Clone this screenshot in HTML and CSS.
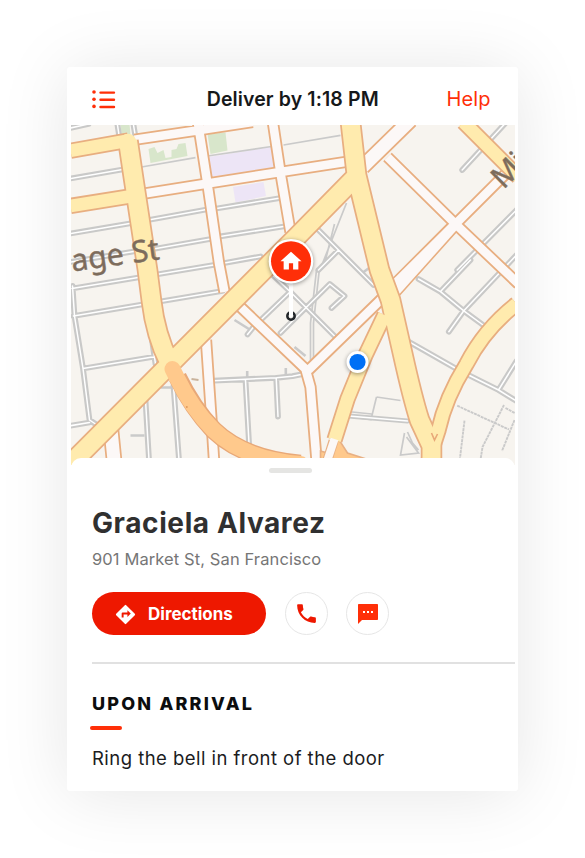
FILE: index.html
```html
<!DOCTYPE html>
<html lang="en">
<head>
<meta charset="utf-8">
<title>Delivery</title>
<link rel="stylesheet" href="styles.css">
</head>
<body>
<main class="card">
  <header class="bar">
    <svg class="menu" viewBox="0 0 24 20" aria-hidden="true">
      <g fill="currentColor"><circle cx="2" cy="2" r="1.800"/><circle cx="2" cy="9.200" r="1.800"/><circle cx="2" cy="16.400" r="1.800"/></g>
      <path d="M8.500 2.600H22M8.500 9.800H22M8.500 17H22" stroke="currentColor" stroke-width="2.400" stroke-linecap="round"/>
    </svg>
    <span class="title">Deliver by 1:18 PM</span>
    <a class="help">Help</a>
  </header>

  <svg class="map" viewBox="70.5 125 444 340">
    <defs>
      <path id="lanes" d="M70 178.500L122 169.500M70 233.500L132 223M70 262L133 251.500M71.500 288.500L213 265L260 256.500M73 316L222 291M72 286L74 316L82.500 368.500L89 420L98 426M82.500 368.500L155 356.500M70 425.700L89 422.500M151.500 340L155 364M148 220L206 209.500M213 209L280 198M150 249.500L210 239M218 236.700L283 226.500M116.500 122L119 138M132.500 122L135 137M70 128L88 124M145 400L148.500 460M173 386L178.500 460M213 380.700L276 377.800L292 376.200L308 373M245 380L249 452M275.700 378L277.500 416.500M247 334.500L253 327L290 291.500M271 274L290 292L336 338M280 333L329.300 284L344 296L331 308M318 230L373 285M338 250L318 270M461.700 170L506 122M456.700 270L516 210M470 260L440 291.500M516 255L463.300 310.700L448.300 331.700M418 279L440 291.700L463 310.700L488 329M408.300 341.700L458 370L498 390L516 401M498 390L516 361"/>
      <path id="white" d="M134 139.800L193 131L252 122M141 194L207 183.500L280 172L348 161.500M197.500 123L207 184L218.500 263L224 292M205.500 340L211 420L213.500 460M272.500 123L280 173L290 232M240 307L305 369L310 387L316 460M308 370L378 302L423 257L455 224L508 171M387 157L455 224L518 284"/>
      <path id="wide" d="M362 167L410 120M110 425L113.500 460"/>
      <path id="ybroad" d="M127.500 141L133 178L147 270L151 301Q155 335 169 363M55 479L297 236L355 177M350 122L356 175L379 270L390 300L402 353Q412 398 419 420L431 446L431 464"/>
      <path id="ythin" d="M70 150.800L128 140.500M70 206L135 195.500M384 315L365 355L347 399L334 440M516 304Q484 329 466 364Q445 398 438 430L427 464M463 122L518 177"/>
    </defs>
    <rect x="70" y="124" width="446" height="342" fill="#f7f4ef"/>
    <g fill="#d8e6cb">
      <path d="M148 149L154 147L157 153L163 150L165 158L171 157V150L176 149L178 144L185 143L187 156L150 163Z"/>
      <path d="M207 134L225 132.500L227 150.500L210 154Z"/>
      <path d="M120 124H129L130 135H121Z"/>
    </g>
    <g fill="#ede5f6"><path d="M208 157L271 147L273.500 167L211 177Z"/><path d="M232.500 187L263 182L265.500 196L235 202.500Z"/></g>
    <g fill="none" stroke="#cacaca" stroke-width="1.700">
      <path d="M141 167L195 157.700M207 156L271 146.500M283 145L340 135.300M346 203L321 266M334 224L325 260M319 268L313 323V360M316 270L310 323V360M376 397L400 400.500M376 397L370.500 419.500L345 416.500M347 411.500L371 414M404 433L400 455L418 453L406 437M407 432L412 443L418 450"/>
      <path d="M130 435.500H144M160 387.500H173M246.700 371V378M285.300 368V375M234 320L250 330M361.700 273L370 267M294 347L305 356" stroke-width="2.600"/>
      <path d="M456.700 405.700L508.500 429.500M503.500 405L482 447L480 460M505 408L516 414M514 420L501.500 451M464 420.700L459.500 458" stroke-dasharray="3 .7" stroke-width="1.900"/>
    </g>
    <g fill="none" stroke-linecap="round" stroke-linejoin="round">
      <use href="#lanes" stroke="#c9c9c8" stroke-width="5.800"/>
      <path d="M348 416L407 421" stroke="#c9c9c8" stroke-width="5"/>
      <use href="#lanes" stroke="#fff" stroke-width="1.500"/>
      <path d="M348 416L407 421" stroke="#fff" stroke-width="1.600"/>
    </g>
    <g fill="none">
      <g stroke="#e8ae80"><use href="#white" stroke-width="12.200"/><use href="#wide" stroke-width="16.500"/><path d="M391 280L451 220L459 228L399 295Z" fill="#e8ae80" stroke-width="1.700"/></g>
      <g stroke="#fcf8f7"><use href="#white" stroke-width="8.600"/><use href="#wide" stroke-width="13"/><path d="M391 281L451 221.500L458 228L399 294Z" fill="#fcf8f7" stroke="none"/></g>
      <path d="M320 460L320 451L327 453L334 438L340 442L347 453L372 461Z" fill="#ffc98c" stroke="#e8b084" stroke-width="1.600"/>
      <g stroke="#e8ae80"><use href="#ythin" stroke-width="16.400"/><use href="#ybroad" stroke-width="21.500"/></g>
      <g stroke="#ffebae" stroke-linejoin="round"><use href="#ythin" stroke-width="12.800"/><use href="#ybroad" stroke-width="18"/></g>
      <circle cx="127.500" cy="142" r="8.300" fill="#ffebae"/>
      <path d="M333 441L327 460" stroke="#e8b084" stroke-width="10"/>
      <path d="M334 439L327 460" stroke="#fcf8f7" stroke-width="8"/>
      <path d="M177 377Q192 408 213 430Q243 459 300 464" stroke="#e8a878" stroke-width="18.500"/>
      <path d="M172 369L176 377Q191 408 213 430Q243 459 300 464" stroke="#ffc98c" stroke-width="16" stroke-linecap="round"/>
      <path d="M431 433L434 440L437 434" stroke="#e8a878" stroke-width="1.600"/>
      <path d="M191 379L198 380" stroke="#c9b39c" stroke-width="2"/>
    </g>
    <circle cx="186.300" cy="407" r="1" fill="#e09b60"/>
    <g class="streets">
      <text transform="translate(72 271.500) rotate(-8)">age St</text>
      <text transform="translate(503 190) rotate(-45)">Mi</text>
    </g>
    <circle cx="290.500" cy="316" r="3.700" fill="none" stroke="#222629" stroke-width="2.500"/>
    <path d="M290.500 280V315" stroke="#fff" stroke-width="4" stroke-linecap="round"/>
    <circle class="lift" cx="290.500" cy="261.200" r="22.300" fill="#fff"/>
    <circle cx="290.500" cy="261.200" r="20" fill="#ff2f08"/>
    <path transform="translate(277.900 248.600) scale(1.050)" d="M10 20v-6h4v6h5v-8h3L12 3 2 12h3v8z" fill="#fff"/>
    <circle class="lift" cx="357" cy="362" r="11" fill="#fff"/>
    <circle cx="357" cy="362" r="8.100" fill="#0070f5"/>
  </svg>

  <section class="sheet">
    <div class="handle"></div>
    <h1>Graciela Alvarez</h1>
    <p class="address">901 Market St, San Francisco</p>
    <div class="actions">
      <button class="directions">
        <svg viewBox="0 0 24 24" width="23" height="23"><path fill="#fff" d="M21.710 11.290l-9-9a1 1 0 0 0-1.420 0l-9 9a1 1 0 0 0 0 1.420l9 9a1 1 0 0 0 1.420 0l9-9a1 1 0 0 0 0-1.420zM14 14.500V12h-4v3H8v-4a1 1 0 0 1 1-1h5V7.500l3.500 3.500z"/></svg>
        <span>Directions</span>
      </button>
      <button class="round"><svg viewBox="0 0 24 24" width="25" height="25"><path fill="#ee1800" d="M6.620 10.790c1.440 2.830 3.760 5.140 6.590 6.590l2.200-2.200c.27-.27.67-.36 1.020-.24 1.120.37 2.330.57 3.570.57.55 0 1 .45 1 1V20c0 .55-.45 1-1 1C10.610 21 3 13.390 3 4c0-.55.45-1 1-1h3.500c.55 0 1 .45 1 1 0 1.250.2 2.450.57 3.570.11.35.03.74-.25 1.020z"/></svg></button>
      <button class="round"><svg viewBox="0 0 24 24" width="24" height="24"><path fill="#ff2f08" d="M21 2H3c-.6 0-1 .4-1 1v19l4-4h15c.6 0 1-.4 1-1V3c0-.6-.4-1-1-1z"/><path fill="#fff" d="M7 9h2v2H7zM11 9h2v2h-2zM15 9h2v2h-2z"/></svg></button>
    </div>
    <div class="rule"></div>
    <h2>UPON ARRIVAL</h2>
    <div class="accent"></div>
    <p class="note">Ring the bell in front of the door</p>
  </section>
</main>
</body>
</html>
```
FILE: styles.css
```css
* { box-sizing: border-box; }
body { margin: 0; min-height: 858px; padding: 67px 0 0 67px; background: #fff; font-family: Inter, "Liberation Sans", sans-serif; }
h1, h2, p { margin: 0; white-space: nowrap; }
.card { width: 451px; height: 724px; background: #fff; border-radius: 3px; padding: 0 3.500px; box-shadow: 0 3px 70px rgba(0, 0, 0, .1); }
.bar { height: 58px; padding: 6px 24px 0 21.500px; display: flex; align-items: center; justify-content: space-between; }
.menu { width: 24px; height: 20px; margin-top: 2px; color: #ff2f08; }
.title { font-size: 19.500px; font-weight: 600; color: #16181a; letter-spacing: .12px; margin-left: 23px; }
.help { font-size: 20px; color: #ff2f08; letter-spacing: .1px; }
.map { display: block; width: 444px; height: 340px; }
.streets { font: 30.500px "Noto Sans", sans-serif; fill: #7d6c5c; stroke: #7d6c5c; stroke-width: .4px; }
.lift { filter: drop-shadow(0 1px 2px rgba(0, 0, 0, .4)); }
.sheet { position: relative; margin-top: -7px; padding: 9.500px 0 0 21.500px; background: #fff; border-radius: 10px 10px 0 0; }
.handle { width: 43px; height: 5px; margin-left: 177px; border-radius: 3px; background: #e5e5e3; }
h1 { margin-top: 32.500px; font-size: 28px; line-height: 36px; font-weight: 700; letter-spacing: .6px; color: #303030; }
.address { margin-top: 6px; font-size: 16.500px; line-height: 24px; letter-spacing: .1px; color: #767676; }
.actions { display: flex; margin-top: 21px; height: 43px; }
button { border: 0; padding: 0; font-family: inherit; display: flex; align-items: center; }
.directions { width: 174px; border-radius: 22px; background: #ee1800; color: #fff; padding: 1px 0 0 22px; gap: 11px; font-size: 17px; font-weight: 700; }
.round { width: 43px; justify-content: center; margin-left: 18.700px; border: 1px solid #e6e6e6; border-radius: 50%; background: #fff; }
.rule { height: 2px; margin-top: 27px; background: #e1e1e1; }
h2 { margin-top: 30px; font-size: 18px; line-height: 20px; font-weight: 800; letter-spacing: 2.200px; color: #0c0d0e; }
.accent { width: 32px; height: 4px; margin: 12px 0 0 -2px; border-radius: 2px; background: #ff2f08; }
.note { margin-top: 16px; font-size: 18.500px; line-height: 24px; letter-spacing: .46px; color: #1b1c1e; }
```
